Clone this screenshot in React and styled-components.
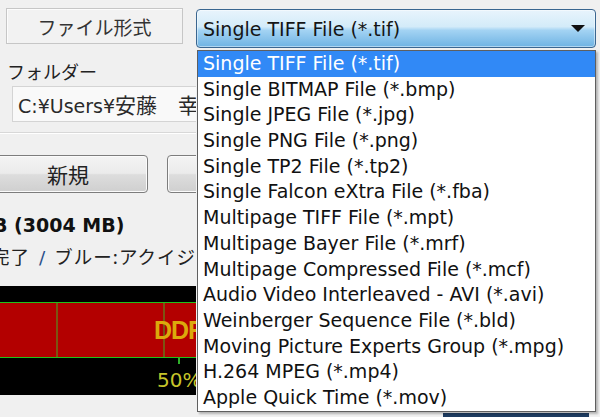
import React from "react";
import styled, { createGlobalStyle } from "styled-components";

const GlobalStyle = createGlobalStyle`
  html, body {
    margin: 0;
    padding: 0;
    background: #f0f0f0;
  }
  * {
    box-sizing: border-box;
  }
`;

const latin = `"DejaVu Sans", "Noto Sans CJK JP", sans-serif`;
const jp = `"Noto Sans CJK JP", "DejaVu Sans", sans-serif`;

const formats = [
  "Single TIFF File (*.tif)",
  "Single BITMAP File (*.bmp)",
  "Single JPEG File (*.jpg)",
  "Single PNG File (*.png)",
  "Single TP2 File (*.tp2)",
  "Single Falcon eXtra File (*.fba)",
  "Multipage TIFF File (*.mpt)",
  "Multipage Bayer File (*.mrf)",
  "Multipage Compressed File (*.mcf)",
  "Audio Video Interleaved - AVI (*.avi)",
  "Weinberger Sequence File (*.bld)",
  "Moving Picture Experts Group (*.mpg)",
  "H.264 MPEG (*.mp4)",
  "Apple Quick Time (*.mov)",
];

const Window = styled.div`
  position: relative;
  width: 600px;
  height: 417px;
  overflow: hidden;
  display: grid;
  grid-template-columns: 196px 1fr;
  background: #f0f0f0;
  font-family: ${latin};
  color: #111;
`;

const LeftPane = styled.div`
  display: flex;
  flex-direction: column;
  overflow: hidden;
  min-width: 0;
`;

const FormatLabel = styled.div`
  margin: 8px 13px 0 6px;
  height: 36px;
  border: 1px solid #c6c6c6;
  box-shadow: inset 1px 1px 0 #fcfcfc;
  background: #f2f2f2;
  display: flex;
  align-items: center;
  justify-content: center;
  font-family: ${jp};
  font-size: 19px;
  color: #333;
`;

const FieldCaption = styled.div`
  margin: 16px 0 0 7px;
  height: 22px;
  line-height: 22px;
  font-family: ${jp};
  font-size: 18px;
  color: #222;
`;

const PathField = styled.div`
  margin: 4px 0 0 12px;
  width: 184px;
  height: 36px;
  padding-left: 5px;
  border: 1px solid #d4d4d4;
  border-right: none;
  background: #f9f9f9;
  font-size: 19px;
  line-height: 34px;
  white-space: nowrap;
  overflow: hidden;
  color: #2a2a2a;
`;

const Kanji = styled.span`
  font-family: ${jp};
  font-size: 21px;
`;

const Separator = styled.div`
  margin-top: 10px;
  height: 2px;
  border-top: 1px solid #d8d8d8;
  border-bottom: 1px solid #ffffff;
`;

const ButtonRow = styled.div`
  display: flex;
  gap: 19px;
  margin: 21px 0 0 -12px;
`;

const PushButton = styled.div`
  flex: none;
  width: 160px;
  height: 38px;
  border: 1px solid #7d7d7d;
  border-radius: 4px;
  box-shadow: inset 0 0 0 1px #fbfbfb;
  background: linear-gradient(#f4f4f4 0%, #ebebeb 48%, #dddddd 52%, #cfcfcf 100%);
  display: flex;
  align-items: center;
  justify-content: center;
  font-family: ${jp};
  font-size: 21px;
  color: #222;
`;

const SizeText = styled.div`
  margin: 21px 0 0 -7px;
  height: 22px;
  line-height: 22px;
  font-size: 19px;
  font-weight: bold;
  white-space: nowrap;
  color: #111;
`;

const StatusText = styled.div`
  margin: 8px 0 0 -9px;
  height: 24px;
  line-height: 24px;
  font-family: ${jp};
  font-size: 18.5px;
  letter-spacing: 1px;
  white-space: nowrap;
  overflow: hidden;
  color: #222;
`;

const Slash = styled.span`
  margin: 0 8px 0 9px;
  color: #2a4f8a;
  font-family: ${latin};
`;

const Track = styled.div`
  margin-top: 18px;
  height: 109px;
  background: #000;
  display: flex;
  flex-direction: column;
`;

const TopBand = styled.div`
  height: 16px;
`;

const RedBand = styled.div`
  position: relative;
  height: 56px;
  background: #b30000;
  border-top: 1px solid #22c01c;
  border-bottom: 1px solid #22c01c;
  overflow: hidden;
`;

const Divider = styled.div`
  position: absolute;
  top: 0;
  bottom: 0;
  width: 2px;
  background: #7c5512;
`;

const BandLabel = styled.div`
  position: absolute;
  left: 154px;
  top: 13px;
  font-family: "Liberation Sans", sans-serif;
  font-weight: bold;
  font-size: 25px;
  letter-spacing: -1px;
  color: #dca90c;
  white-space: nowrap;
`;

const Scale = styled.div`
  position: relative;
  flex: 1;
  overflow: hidden;
`;

const Tick = styled.div`
  position: absolute;
  left: 178px;
  top: 0;
  width: 2px;
  height: 6px;
  background: #2fb02a;
`;

const ScaleLabel = styled.div`
  position: absolute;
  left: 157px;
  top: 12px;
  font-size: 20px;
  line-height: 20px;
  color: #c7c52a;
  white-space: nowrap;
`;

const RightPane = styled.div`
  display: flex;
  flex-direction: column;
`;

const Combo = styled.div`
  margin: 9px 4px 0 0;
  height: 39px;
  border: 1px solid #3a6690;
  border-radius: 4px;
  box-shadow: inset 0 0 0 1px rgba(255, 255, 255, 0.45);
  background: linear-gradient(#e8f4fc 0%, #d3ebf9 45%, #a3d3f3 55%, #6fb3e3 100%);
  display: flex;
  align-items: center;
  padding: 0 10px 0 6px;
  font-size: 19px;
  color: #151515;
`;

const ComboText = styled.span`
  flex: 1;
`;

const Arrow = styled.span`
  width: 0;
  height: 0;
  border-left: 7px solid transparent;
  border-right: 7px solid transparent;
  border-top: 7px solid #111;
`;

const Peek = styled.div`
  margin: auto 0 0 247px;
  width: 146px;
  height: 4px;
  background: #1d3b60;
`;

const DropList = styled.ul`
  position: absolute;
  left: 197px;
  top: 50px;
  width: 399px;
  height: 362px;
  margin: 0;
  padding: 0;
  list-style: none;
  background: #fff;
  border: 1px solid #5f5f5f;
  box-shadow: 2px 2px 2px rgba(0, 0, 0, 0.25);
`;

const Option = styled.li`
  height: 25.7px;
  line-height: 25.7px;
  padding-left: 5px;
  font-size: 19px;
  white-space: nowrap;
  color: ${(p) => (p.$selected ? "#ffffff" : "#111111")};
  background: ${(p) => (p.$selected ? "#3189f6" : "transparent")};
`;

const App = () => {
  return (
    <>
      <GlobalStyle />
      <Window>
        <LeftPane>
          <FormatLabel>ファイル形式</FormatLabel>
          <FieldCaption>フォルダー</FieldCaption>
          <PathField>
            C:¥Users¥<Kanji>安藤　幸子</Kanji>
          </PathField>
          <Separator />
          <ButtonRow>
            <PushButton>新規</PushButton>
            <PushButton />
          </ButtonRow>
          <SizeText>B (3004 MB)</SizeText>
          <StatusText>
            完了<Slash>/</Slash>ブルー:アクイジ
          </StatusText>
          <Track>
            <TopBand />
            <RedBand>
              <Divider style={{ left: 56 }} />
              <Divider style={{ left: 163 }} />
              <BandLabel>DDF</BandLabel>
            </RedBand>
            <Scale>
              <Tick />
              <ScaleLabel>50%</ScaleLabel>
            </Scale>
          </Track>
        </LeftPane>
        <RightPane>
          <Combo>
            <ComboText>Single TIFF File (*.tif)</ComboText>
            <Arrow />
          </Combo>
          <Peek />
        </RightPane>
        <DropList>
          {formats.map((f, i) => (
            <Option key={f} $selected={i === 0}>
              {f}
            </Option>
          ))}
        </DropList>
      </Window>
    </>
  );
};

export default App;
